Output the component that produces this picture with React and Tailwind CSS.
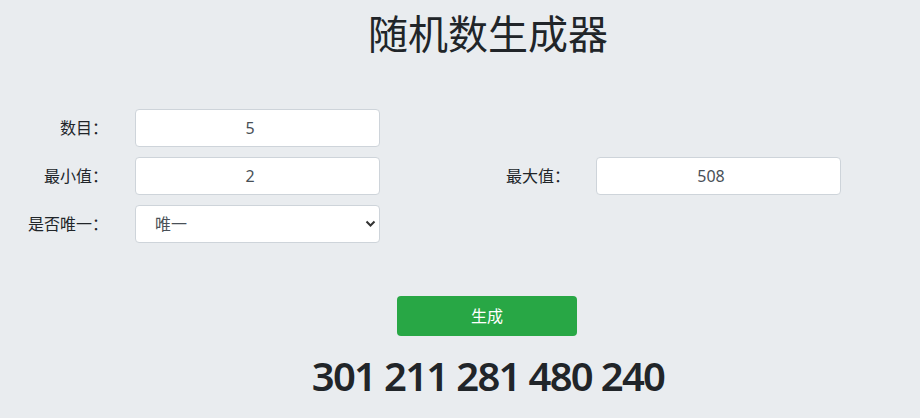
import React from "react";

const font = { fontFamily: '"Noto Sans", "Noto Sans CJK SC", sans-serif' };

function Field({ value, className = "" }) {
  return (
    <input
      type="text"
      readOnly
      value={value}
      className={`h-[38px] w-[245px] shrink-0 rounded-[4px] border border-[#ced4da] bg-white pl-3 pr-[27px] text-center text-[16px] text-[#495057] outline-none ${className}`}
    />
  );
}

export default function App() {
  return (
    <div
      className="min-h-screen w-full bg-[#e9ecef] text-[#212529]"
      style={font}
    >
      <h1 className="pl-[56px] pt-[10px] text-center text-[40px] font-normal leading-[48px]">
        随机数生成器
      </h1>

      <div className="mt-[51px] flex flex-col gap-[10px] text-[16px]">
        <div className="flex items-center">
          <label className="w-[108px] shrink-0 text-right">数目：</label>
          <div className="w-[27px] shrink-0" />
          <Field value="5" />
        </div>
        <div className="flex items-center">
          <label className="w-[108px] shrink-0 text-right">最小值：</label>
          <div className="w-[27px] shrink-0" />
          <Field value="2" />
          <label className="w-[190px] shrink-0 text-right">最大值：</label>
          <div className="w-[26px] shrink-0" />
          <Field value="508" />
        </div>
        <div className="flex items-center">
          <label className="w-[108px] shrink-0 text-right">是否唯一：</label>
          <div className="w-[27px] shrink-0" />
          <div className="relative h-[38px] w-[245px] shrink-0">
            <select
              defaultValue="唯一"
              className="h-full w-full appearance-none rounded-[4px] border border-[#ced4da] bg-white pl-[19px] text-[16px] text-[#495057] outline-none"
            >
              <option>唯一</option>
              <option>不唯一</option>
            </select>
            <svg
              className="pointer-events-none absolute right-[4px] top-[15px]"
              width="11"
              height="8"
              viewBox="0 0 11 8"
            >
              <path
                d="M1.5 1.5 L5.5 5.5 L9.5 1.5"
                fill="none"
                stroke="#333"
                strokeWidth="2"
              />
            </svg>
          </div>
        </div>
      </div>

      <div className="mt-[53px] flex justify-center pl-[54px]">
        <button className="h-[40px] w-[180px] rounded-[4px] bg-[#28a745] text-[16px] text-white">
          生成
        </button>
      </div>

      <div className="mt-[16px] pl-[56px] text-center text-[40px] font-semibold leading-[48px] tracking-[-1.7px]">
        301 211 281 480 240
      </div>
    </div>
  );
}
